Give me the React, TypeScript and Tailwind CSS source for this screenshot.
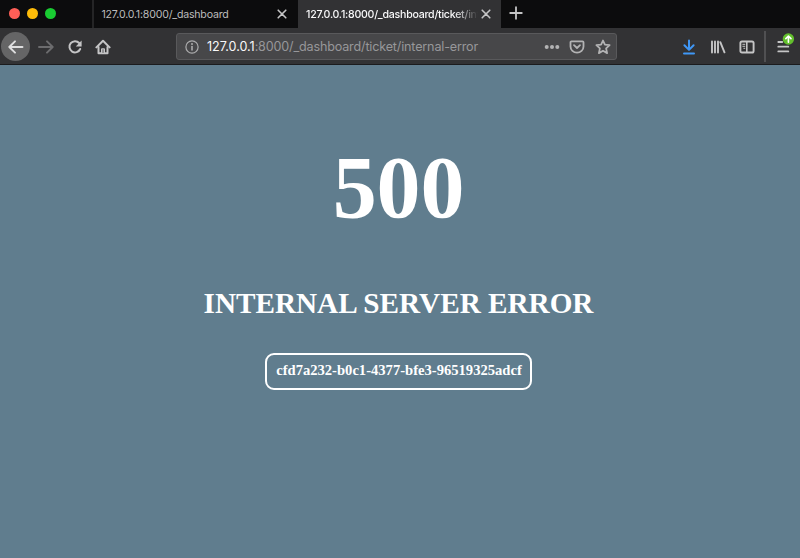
import type { ReactNode } from 'react';

function Icon({ box, className, children }: { box: string; className: string; children: ReactNode }) {
  return (
    <svg
      viewBox={box}
      className={`shrink-0 ${className}`}
      fill="none"
      stroke="currentColor"
      strokeWidth="2"
      strokeLinecap="round"
      strokeLinejoin="round"
    >
      {children}
    </svg>
  );
}

function CloseIcon() {
  return (
    <Icon box="0 0 10 10" className="size-[10px] text-[#c4c4c5]">
      <path d="M1.2 1.2 8.8 8.8M8.8 1.2 1.2 8.8" strokeWidth="1.6" />
    </Icon>
  );
}

function TabBar() {
  return (
    <div className="flex h-[28px] bg-[#0c0c0d]">
      <div className="flex w-[92px] items-center gap-[6.5px] pb-[1px] pl-[8.5px]">
        <span className="size-[11.5px] rounded-full bg-[#ff5f57]" />
        <span className="size-[11.5px] rounded-full bg-[#febc09]" />
        <span className="size-[11.5px] rounded-full bg-[#19cc32]" />
      </div>
      <div className="flex w-[206px] items-center border-l-2 border-[#252526] pr-[11.5px] pl-[7.5px]">
        <span className="grow pt-[2px] text-[10.6px] tracking-[-0.2px] whitespace-nowrap text-[#bcbcbd]">
          127.0.0.1:8000/_dashboard
        </span>
        <CloseIcon />
      </div>
      <div className="flex w-[203px] items-center bg-[#323234] pr-[10px] pl-[8px]">
        <span className="w-[172px] overflow-hidden pt-[2px] text-[10.6px] font-medium tracking-[-0.25px] whitespace-nowrap text-[#f9f9fa] [mask-image:linear-gradient(to_right,black_148px,transparent_172px)]">
          127.0.0.1:8000/_dashboard/ticket/internal-error
        </span>
        <span className="grow" />
        <CloseIcon />
      </div>
      <div className="flex items-center pb-[2px] pl-[8px]">
        <Icon box="0 0 14 14" className="size-[14px] text-[#c4c4c5]">
          <path d="M7 1.2v11.6M1.2 7h11.6" strokeWidth="1.8" />
        </Icon>
      </div>
    </div>
  );
}

function Toolbar() {
  return (
    <div className="flex h-[37px] items-center border-b border-[#1b1b1d] bg-[#323234] pt-px text-[#c5c5c6]">
      <span className="ml-px flex size-[29px] shrink-0 items-center justify-center rounded-full bg-[#656566]">
        <Icon box="0 0 16 16" className="size-[16px] text-[#dededf]">
          <path d="M14.5 8H1.5M7 2.3 1.3 8 7 13.7" strokeWidth="1.9" />
        </Icon>
      </span>
      <Icon box="0 0 16 16" className="ml-[7.5px] size-[16px] text-[#6c6c6e]">
        <path d="M1 8h13M9 2.3 14.7 8 9 13.7" strokeWidth="1.9" />
      </Icon>
      <Icon box="0 0 16 16" className="ml-[13.5px] size-[16px]">
        <path d="M13.2 10A5.6 5.6 0 1 1 12.2 4" />
        <path d="M14.6 1.5v6H8.8z" fill="currentColor" stroke="none" />
      </Icon>
      <Icon box="0 0 16 16" className="ml-[12px] size-[16px]">
        <path d="M1.4 8.4 8 1.8l6.6 6.6" />
        <path d="M3.5 8v6.2h9V8" />
        <path d="M6.5 14V9.8h3V14z" strokeWidth="1" fill="#8e8e90" />
      </Icon>
      <div className="ml-[65px] flex h-[27px] w-[441px] shrink-0 items-center rounded-[3px] border border-[#59595b] bg-[#474749]">
        <Icon box="0 0 14 14" className="ml-[7.5px] size-[14px] text-[#acacad]">
          <circle cx="7" cy="7" r="6.1" strokeWidth="1.2" />
          <path d="M7 6.5V10" strokeWidth="1.6" />
          <circle cx="7" cy="4" r="1" fill="currentColor" stroke="none" />
        </Icon>
        <span className="ml-[8.5px] w-[336.5px] pt-px text-[12.6px] tracking-[-0.17px] whitespace-nowrap text-[#97979a]">
          <span className="tracking-[-0.03px] text-[#f9f9fa]">127.0.0.1</span>:8000/_dashboard/ticket/internal-error
        </span>
        <Icon box="0 0 16 6" className="h-[6px] w-[16px] text-[#b3b3b4]">
          <g fill="currentColor" stroke="none">
            <circle cx="2.7" cy="3" r="2" />
            <circle cx="8" cy="3" r="2" />
            <circle cx="13.3" cy="3" r="2" />
          </g>
        </Icon>
        <Icon box="0 0 16 16" className="ml-[9.5px] size-[16px] text-[#b3b3b4]">
          <path d="M2.5 2.3h11a1 1 0 0 1 1 1v4.2a6.5 6.2 0 0 1-13 0V3.3a1 1 0 0 1 1-1z" strokeWidth="1.8" />
          <path d="M5 6.2 8 9l3-2.8" strokeWidth="1.8" />
        </Icon>
        <Icon box="0 0 16 16" className="ml-[9.5px] size-[16px] text-[#b3b3b4]">
          <path
            d="m8 1.5 1.9 4.2 4.7.5-3.5 3.2 1 4.7L8 11.8l-4.1 2.3 1-4.7-3.5-3.2 4.7-.5z"
            strokeWidth="1.8"
          />
        </Icon>
      </div>
      <Icon box="0 0 16 16" className="ml-[64px] size-[16px] text-[#3f97f6]">
        <path d="M8 1.4v9M3.4 6.3 8 10.9l4.6-4.6M3 14.4h10" />
      </Icon>
      <Icon box="0 0 16 16" className="ml-[13px] size-[16px]">
        <path d="M2 2.5v11M5 2.5v11M8 2.5v11M10.3 3.2l4.2 10.1" strokeWidth="1.9" />
      </Icon>
      <Icon box="0 0 16 16" className="ml-[13px] size-[16px]">
        <rect x="1.4" y="2.5" width="13.2" height="11" rx="1.6" strokeWidth="1.9" />
        <path d="M7.8 3v10" strokeWidth="1.6" />
        <path d="M3.8 5.3h2M3.8 7.3h2M4.8 9.3h1" strokeWidth="1" />
      </Icon>
      <span className="ml-[9px] h-[31px] w-[1.5px] bg-[#505052]" />
      <Icon box="0 0 20 28" className="ml-[10px] h-[28px] w-[20px]">
        <path d="M2.3 9h4M2.3 13.7h10M2.3 18.4h10" strokeWidth="1.8" />
        <circle cx="12.4" cy="6" r="5.7" fill="#63bf2c" stroke="none" />
        <path d="M12.4 9.2V3.4M9.8 5.6 12.4 3 15 5.6" stroke="#fff" strokeWidth="1.6" />
      </Icon>
    </div>
  );
}

export default function App() {
  return (
    <div className="flex h-[558px] w-[800px] flex-col overflow-hidden bg-[#607d8e] font-[Inter,'Liberation_Sans',sans-serif]">
      <TabBar />
      <Toolbar />
      <main className="flex grow flex-col items-center pr-[3px] font-['Liberation_Serif',serif] font-bold text-white">
        <h1 className="mt-[73px] text-[88px] leading-[100px] tracking-[-0.2px]">500</h1>
        <h2 className="mt-[48px] text-[29.2px] leading-[34px] whitespace-nowrap">INTERNAL SERVER ERROR</h2>
        <p className="mt-[33px] flex h-[37px] w-[267px] items-center justify-center rounded-[9px] border-2 border-white pb-[2px] pl-px text-[14.6px] whitespace-nowrap">
          cfd7a232-b0c1-4377-bfe3-96519325adcf
        </p>
      </main>
    </div>
  );
}
